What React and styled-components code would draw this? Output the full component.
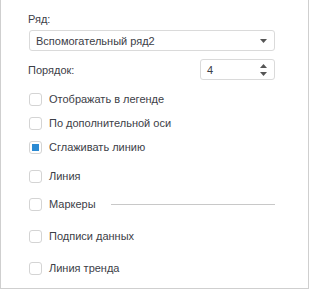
import React from 'react';
import styled, { createGlobalStyle } from 'styled-components';

const GlobalStyle = createGlobalStyle`
  body {
    margin: 0;
    background: #fff;
    font-family: "Liberation Sans", Arial, sans-serif;
  }
`;

const rows = [
  { label: 'Отображать в легенде', gap: 7 },
  { label: 'По дополнительной оси', gap: 0 },
  { label: 'Сглаживать линию', gap: 0, checked: true },
  { label: 'Линия', gap: 5 },
  { label: 'Маркеры', gap: 4, line: true },
  { label: 'Подписи данных', gap: 8 },
  { label: 'Линия тренда', gap: 8 },
];

export default function App() {
  return (
    <>
      <GlobalStyle />
      <Panel>
        <Label>Ряд:</Label>
        <Select>
          <span>Вспомогательный ряд2</span>
          <Arrow width="7" height="4" viewBox="0 0 7 4">
            <path d="M0 0h7L3.5 4z" fill="#555" />
          </Arrow>
        </Select>
        <OrderRow>
          <Label>Порядок:</Label>
          <Spinner>
            <span>4</span>
            <Arrows>
              <svg width="7" height="4" viewBox="0 0 7 4">
                <path d="M0 4h7L3.5 0z" fill="#555" />
              </svg>
              <svg width="7" height="4" viewBox="0 0 7 4">
                <path d="M0 0h7L3.5 4z" fill="#555" />
              </svg>
            </Arrows>
          </Spinner>
        </OrderRow>
        {rows.map((r) => (
          <CheckRow key={r.label} gap={r.gap}>
            <Box>{r.checked && <Mark />}</Box>
            <CheckText>{r.label}</CheckText>
            {r.line && <Rule />}
          </CheckRow>
        ))}
      </Panel>
    </>
  );
}

const Panel = styled.div`
  box-sizing: border-box;
  width: 309px;
  height: 290px;
  margin-top: -1px;
  border: 1px solid #cfcfcf;
  padding: 11px 33px 0 27px;
  color: #3c4047;
  font-size: 11px;
`;

const Label = styled.div`
  line-height: 16px;
  height: 16px;
  margin-bottom: 3px;
`;

const Select = styled.div`
  box-sizing: border-box;
  height: 21px;
  margin-left: 1px;
  border: 1px solid #dadada;
  border-radius: 3px;
  display: flex;
  align-items: center;
  justify-content: space-between;
  padding: 0 7px 0 6px;
`;

const Arrow = styled.svg`
  display: block;
`;

const OrderRow = styled.div`
  display: flex;
  align-items: center;
  justify-content: space-between;
  margin-top: 8px;

  ${Label} {
    margin-bottom: 0;
  }
`;

const Spinner = styled.div`
  box-sizing: border-box;
  width: 75px;
  height: 21px;
  border: 1px solid #dadada;
  border-radius: 3px;
  display: flex;
  align-items: center;
  justify-content: space-between;
  padding: 0 7px 0 6px;
`;

const Arrows = styled.div`
  display: flex;
  flex-direction: column;
  gap: 4px;

  svg {
    display: block;
  }
`;

const CheckRow = styled.div`
  display: flex;
  align-items: center;
  height: 24px;
  margin-top: ${(p) => p.gap}px;
  padding-left: 1px;
`;

const Box = styled.div`
  box-sizing: border-box;
  width: 13px;
  height: 13px;
  border: 1px solid #d4d4d4;
  border-radius: 3px;
  display: flex;
  align-items: center;
  justify-content: center;
  flex-shrink: 0;
`;

const Mark = styled.div`
  width: 7px;
  height: 7px;
  background: #2b8ad3;
`;

const CheckText = styled.span`
  margin-left: 7px;
  white-space: nowrap;
`;

const Rule = styled.div`
  flex: 1;
  height: 1px;
  background: #c8c8c8;
  margin-left: 15px;
`;
